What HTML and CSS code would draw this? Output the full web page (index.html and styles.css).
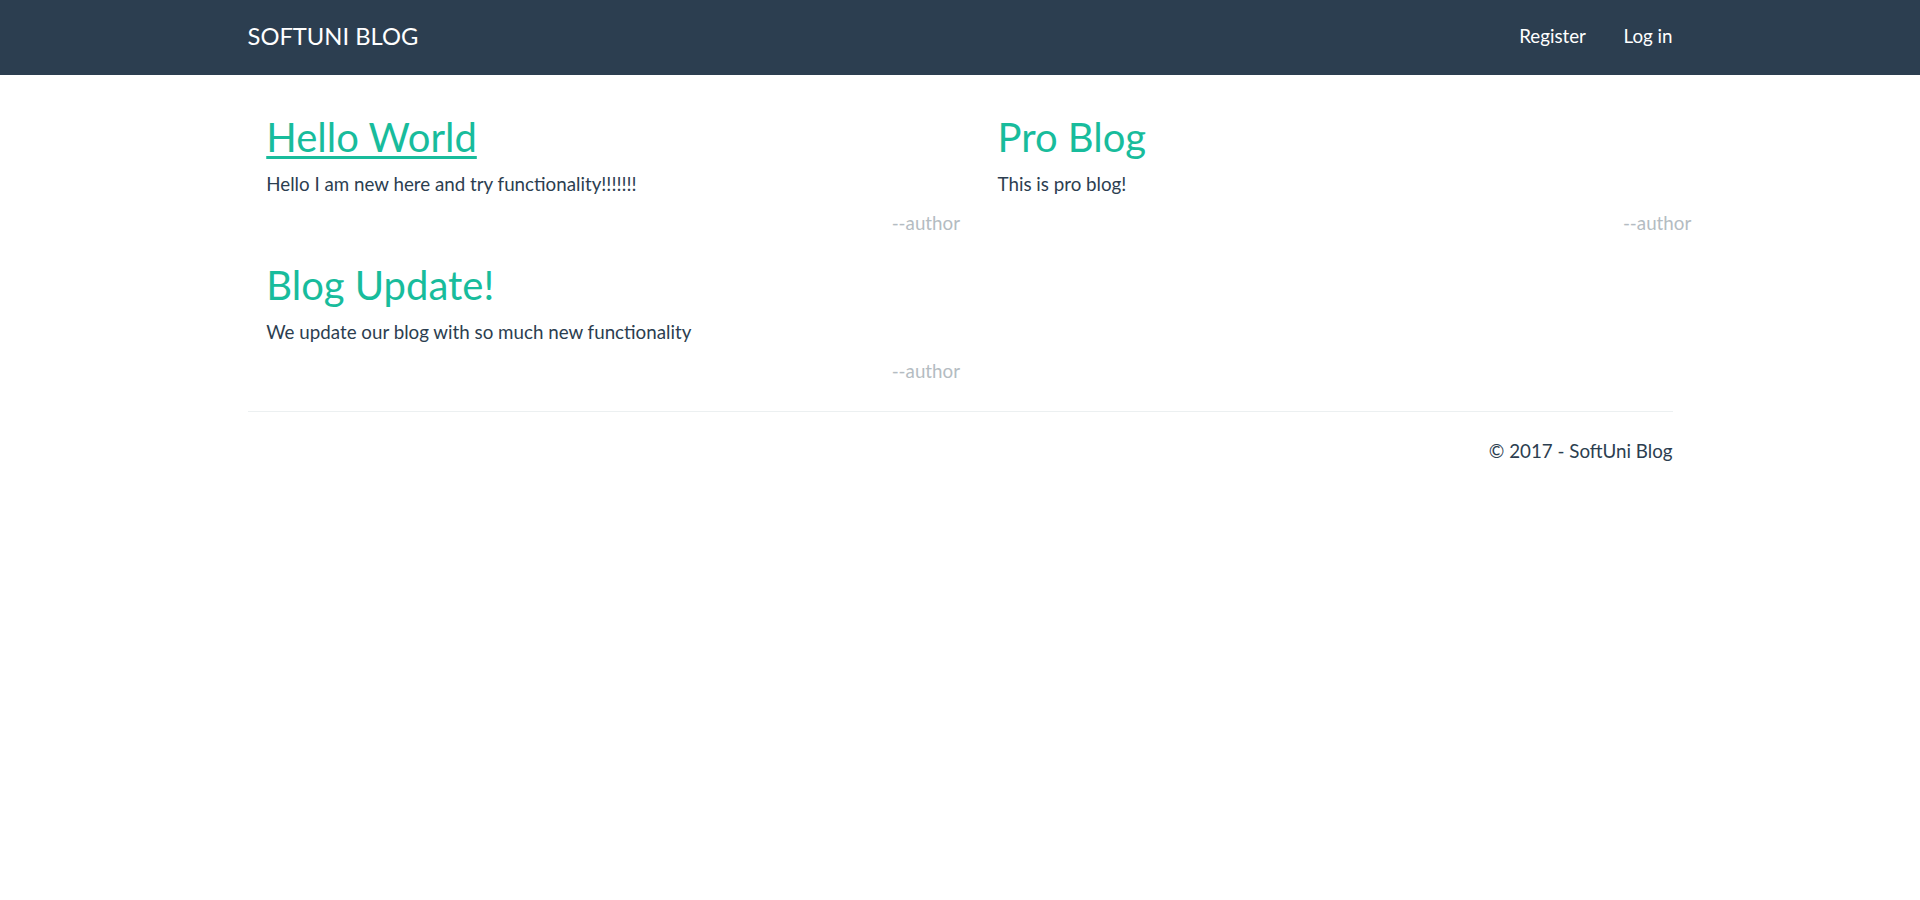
FILE: index.html
```html
<!DOCTYPE html>
<html lang="en">
<head>
<meta charset="utf-8">
<title>SoftUni Blog</title>
<link rel="stylesheet" href="styles.css">
</head>
<body>
<nav class="navbar">
  <div class="container nav-inner">
    <a class="brand" href="#">SOFTUNI BLOG</a>
    <ul class="nav-links">
      <li><a href="#">Register</a></li>
      <li><a href="#">Log in</a></li>
    </ul>
  </div>
</nav>
<main class="container">
  <div class="posts">
    <article class="post">
      <h2 class="post-title"><a class="hovered" href="#">Hello World</a></h2>
      <p class="post-body">Hello I am new here and try functionality!!!!!!!</p>
      <p class="post-author">--author</p>
    </article>
    <article class="post">
      <h2 class="post-title"><a href="#">Pro Blog</a></h2>
      <p class="post-body">This is pro blog!</p>
      <p class="post-author">--author</p>
    </article>
    <article class="post">
      <h2 class="post-title"><a href="#">Blog Update!</a></h2>
      <p class="post-body">We update our blog with so much new functionality</p>
      <p class="post-author">--author</p>
    </article>
  </div>
  <hr class="divider">
  <footer class="footer">
    <p>© 2017 - SoftUni Blog</p>
  </footer>
</main>
</body>
</html>
```
FILE: styles.css
```css
* { box-sizing: border-box; }
html, body { margin: 0; padding: 0; }
body {
  font-family: Lato, "Open Sans", "Liberation Sans", sans-serif;
  font-size: 18.75px;
  line-height: 26.8px;
  color: #2c3e50;
  background: #fff;
}
a { text-decoration: none; }

.container {
  width: 1462.5px;
  margin: 0 auto;
  padding: 0 18.75px;
}

.navbar {
  background: #2c3e50;
  height: 75px;
}
.nav-inner {
  display: flex;
  justify-content: space-between;
  align-items: flex-start;
  height: 75px;
}
.brand {
  color: #fff;
  font-size: 23.75px;
  line-height: 26.25px;
  padding: 23px 0;
  display: block;
}
.nav-links {
  list-style: none;
  margin: 0 -18.75px 0 0;
  padding: 0;
  display: flex;
}
.nav-links a {
  display: block;
  color: #fff;
  font-size: 18.75px;
  line-height: 26.25px;
  padding: 23px 18.75px;
}

.posts {
  display: grid;
  grid-template-columns: 731.25px 731.25px;
  row-gap: 26px;
  padding-top: 40px;
}
.post {
  padding: 0 18.75px;
}
.post-title {
  font-size: 40px;
  line-height: 44px;
  font-weight: 400;
  margin: 0 0 12px;
}
.post-title a { color: #18bc9c; }
.post-title a.hovered {
  text-decoration: underline;
  text-decoration-thickness: 3px;
  text-underline-offset: 4px;
}
.post-body { margin: 0 0 12.25px; }
.post-author {
  margin: 0;
  text-align: right;
  color: #b4bcc2;
}

.divider {
  border: 0;
  border-top: 1px solid #ecf0f1;
  margin: 26.25px 0;
  height: 0;
}
.footer p {
  margin: 0;
  text-align: right;
}
```
